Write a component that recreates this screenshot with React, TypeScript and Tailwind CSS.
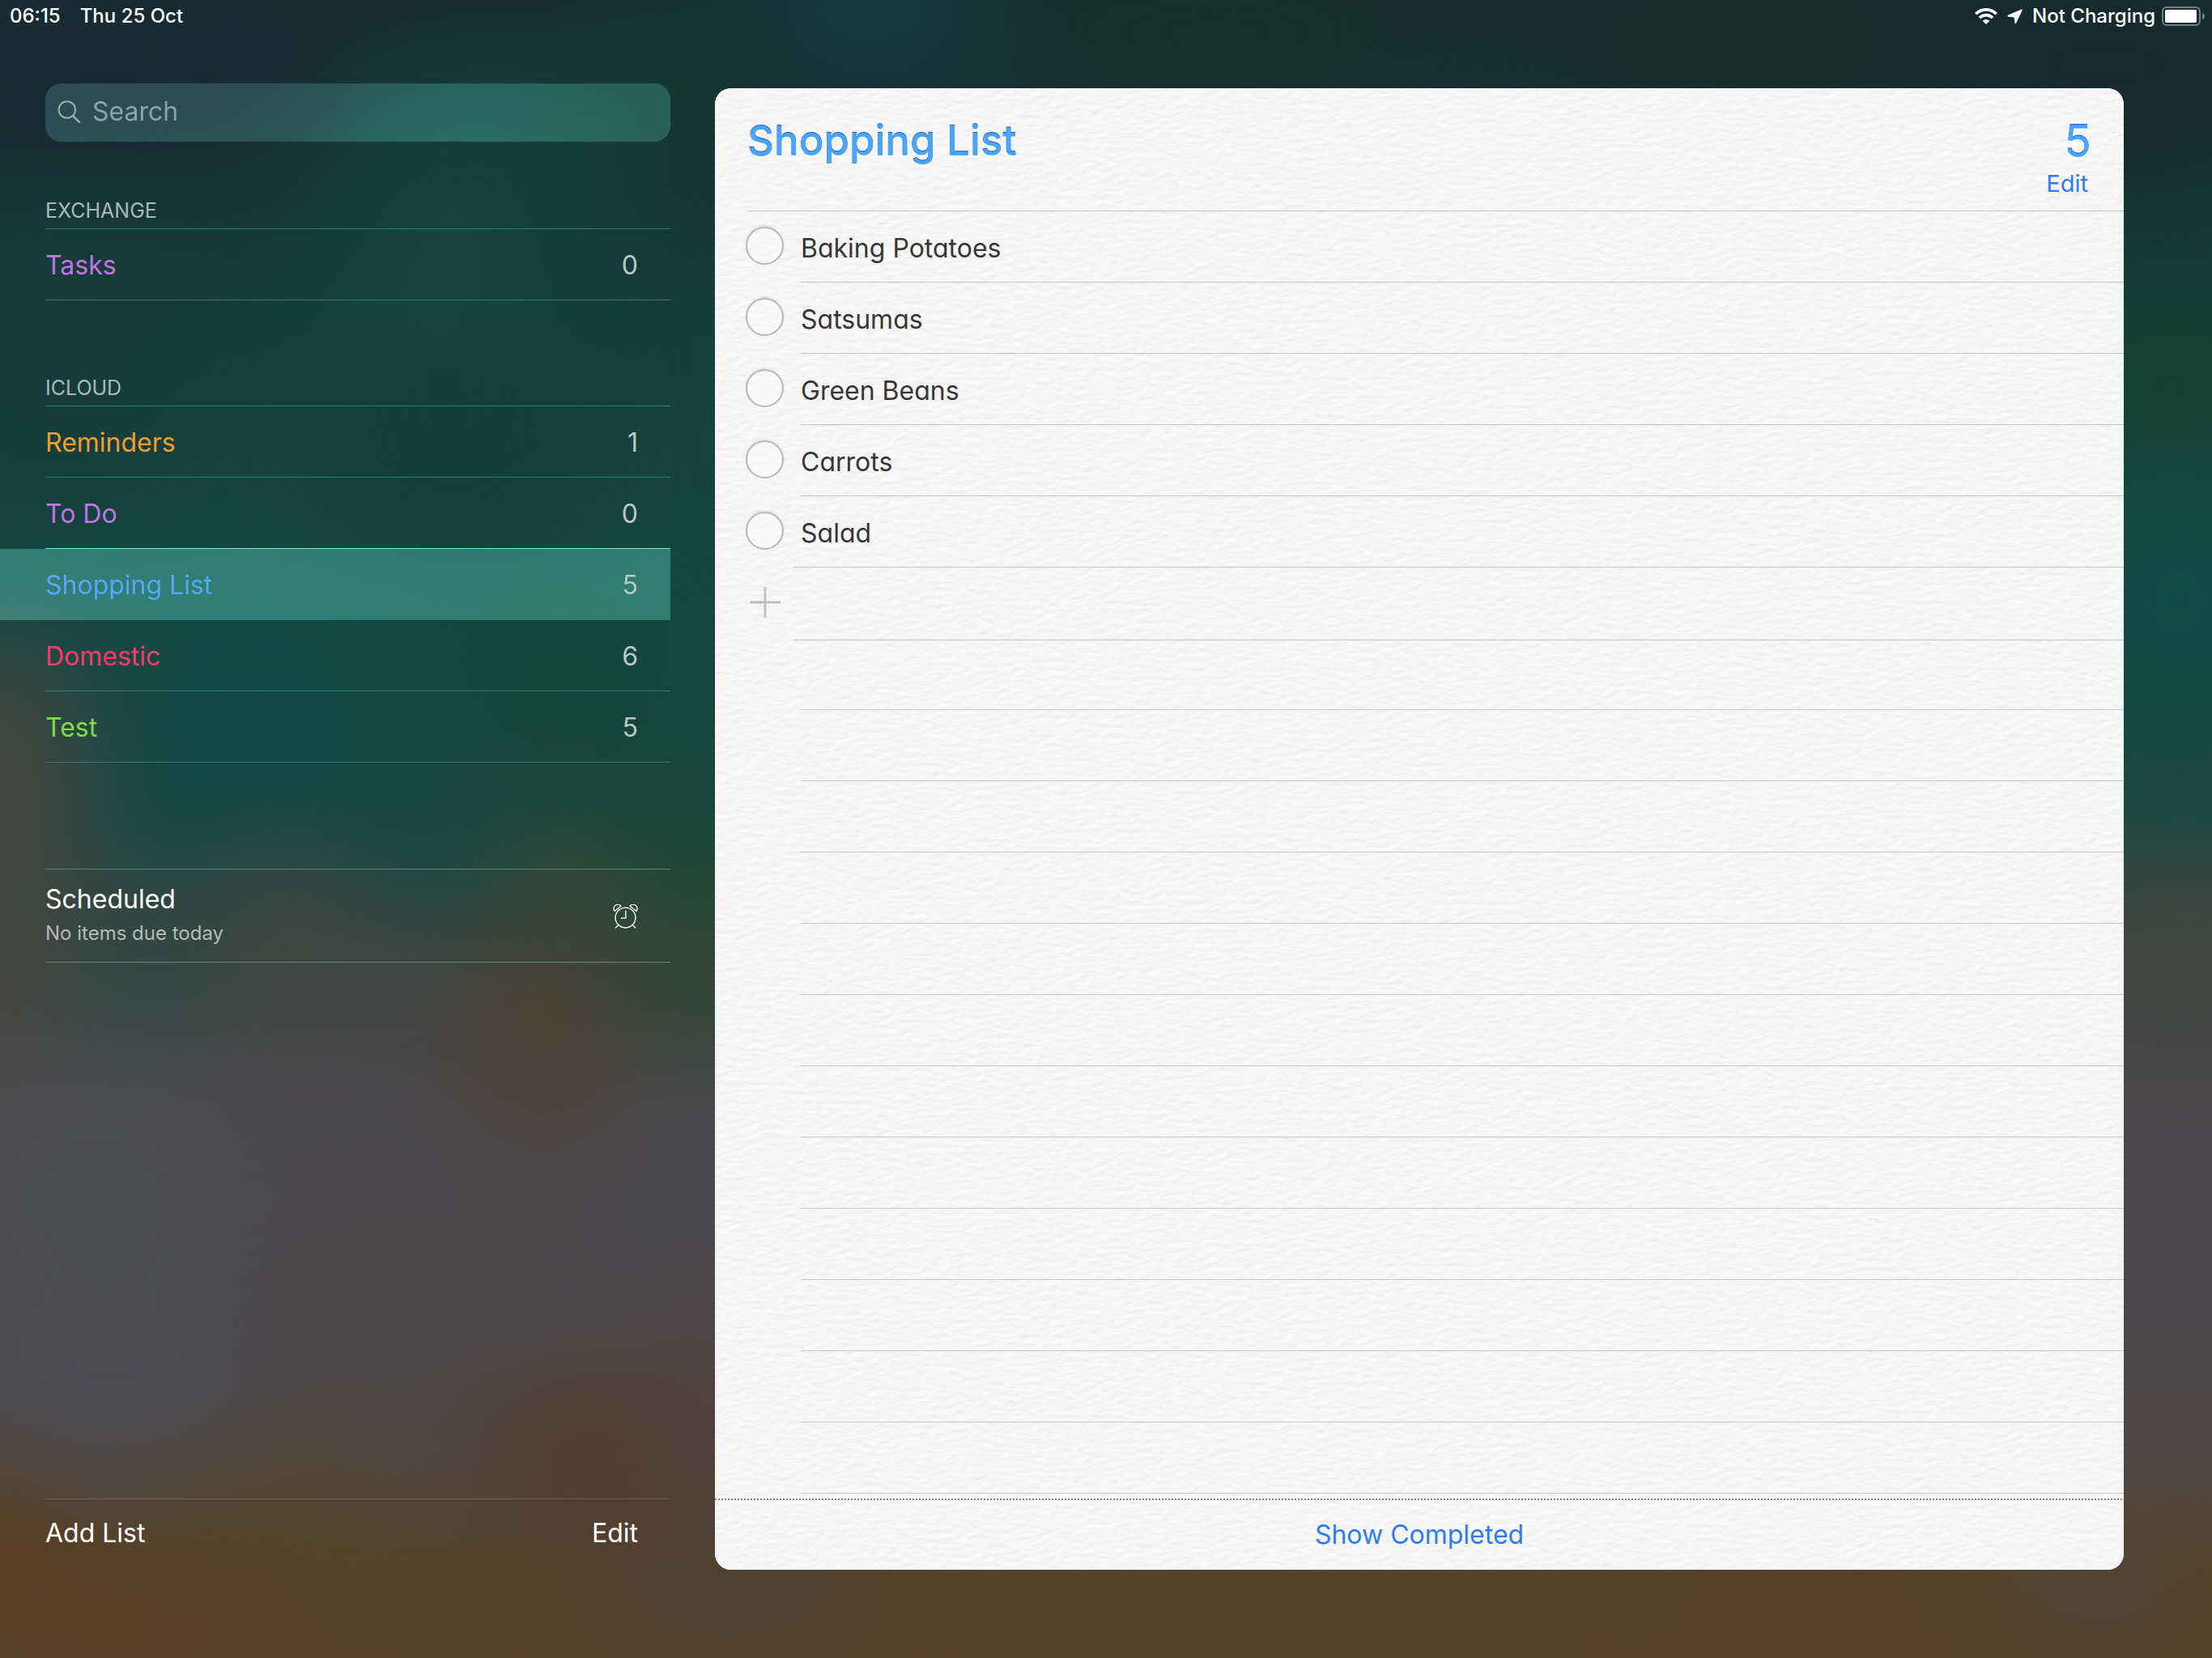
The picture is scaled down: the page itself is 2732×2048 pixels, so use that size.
import React from "react";

type ListEntry = {
  name: string;
  count: number;
  color: string;
  line: string;
  selected?: boolean;
};

const GREEN_LINE = "border-[#2c7f6f]";

const exchange: ListEntry[] = [
  { name: "Tasks", count: 0, color: "text-[#c173e0]", line: GREEN_LINE },
];

const icloud: ListEntry[] = [
  { name: "Reminders", count: 1, color: "text-[#f49b2e]", line: GREEN_LINE },
  { name: "To Do", count: 0, color: "text-[#c173e0]", line: "border-[#6af0d2]" },
  { name: "Shopping List", count: 5, color: "text-[#55a8f5]", line: "border-transparent", selected: true },
  { name: "Domestic", count: 6, color: "text-[#f43a6b]", line: GREEN_LINE },
  { name: "Test", count: 5, color: "text-[#7fdb4e]", line: "border-[#35796b]" },
];

const items = ["Baking Potatoes", "Satsumas", "Green Beans", "Carrots", "Salad"];

type Blob = [cx: number, cy: number, rx: number, ry: number, color: string];

const blobs: Blob[] = [
  [80, 60, 360, 150, "#172b32"],
  [600, 200, 200, 120, "#15403b"],
  [1080, 0, 150, 110, "#153c41"],
  [1500, 40, 260, 80, "#163229"],
  [2200, 60, 300, 90, "#172f29"],
  [2600, 80, 250, 150, "#162b2e"],
  [820, 110, 110, 110, "#153931"],
  [540, 380, 170, 150, "#15433a"],
  [60, 420, 160, 160, "#163c3b"],
  [560, 560, 170, 120, "#153f3b"],
  [700, 850, 160, 130, "#144539"],
  [300, 930, 200, 130, "#134845"],
  [2680, 470, 120, 90, "#15432f"],
  [2690, 740, 120, 150, "#144b46"],
  [870, 1050, 110, 100, "#154737"],
  [0, 980, 110, 190, "#45453f"],
  [360, 1130, 110, 80, "#424540"],
  [530, 1050, 110, 70, "#16483f"],
  [690, 1090, 80, 70, "#35463a"],
  [170, 1190, 110, 80, "#2c4842"],
  [860, 1190, 100, 110, "#2f4637"],
  [500, 1220, 110, 70, "#424545"],
  [670, 1270, 90, 120, "#4b4032"],
  [2700, 1180, 130, 80, "#424540"],
  [0, 1230, 90, 60, "#494541"],
  [120, 1480, 230, 190, "#4c4d50"],
  [430, 1430, 170, 120, "#4b494d"],
  [830, 1440, 90, 130, "#4a494d"],
  [450, 1640, 150, 130, "#4b4647"],
  [130, 1720, 210, 110, "#4c4c52"],
  [740, 1800, 150, 90, "#533a2a"],
  [870, 1720, 90, 90, "#4f4140"],
  [0, 1900, 90, 90, "#593d1f"],
  [330, 1860, 180, 60, "#55442b"],
  [150, 2010, 220, 90, "#573e23"],
  [900, 1960, 180, 60, "#514136"],
  [2220, 1990, 160, 60, "#573f26"],
  [2590, 1960, 110, 60, "#53453a"],
];

function Wallpaper() {
  return (
    <svg
      aria-hidden="true"
      className="absolute inset-0 h-full w-full"
      viewBox="0 0 2732 2048"
      preserveAspectRatio="none"
    >
      <defs>
        <linearGradient id="base" x1="0" y1="0" x2="0" y2="1">
          <stop offset="0" stopColor="#172c2f" />
          <stop offset="0.1" stopColor="#163536" />
          <stop offset="0.22" stopColor="#15413b" />
          <stop offset="0.38" stopColor="#144742" />
          <stop offset="0.49" stopColor="#1c4940" />
          <stop offset="0.57" stopColor="#3c4540" />
          <stop offset="0.66" stopColor="#4b474a" />
          <stop offset="0.8" stopColor="#4c494c" />
          <stop offset="0.88" stopColor="#4f4745" />
          <stop offset="0.94" stopColor="#55432b" />
          <stop offset="1" stopColor="#543f27" />
        </linearGradient>
        <filter id="soft" x="-20%" y="-20%" width="140%" height="140%" colorInterpolationFilters="sRGB">
          <feGaussianBlur stdDeviation="62" />
        </filter>
      </defs>
      <rect width="2732" height="2048" fill="url(#base)" />
      <g filter="url(#soft)">
        {blobs.map(([cx, cy, rx, ry, color]) => (
          <ellipse key={`${cx}-${cy}`} cx={cx} cy={cy} rx={rx} ry={ry} fill={color} />
        ))}
      </g>
    </svg>
  );
}

function PaperTexture() {
  return (
    <svg aria-hidden="true" className="absolute inset-0 h-full w-full">
      <filter id="paper" x="0" y="0" width="100%" height="100%" colorInterpolationFilters="sRGB">
        <feTurbulence type="fractalNoise" baseFrequency="0.08 0.17" numOctaves="3" seed="7" stitchTiles="stitch" />
        <feDiffuseLighting lightingColor="#ffffff" surfaceScale="1" diffuseConstant="1">
          <feDistantLight azimuth="250" elevation="60" />
        </feDiffuseLighting>
        <feComponentTransfer>
          <feFuncR type="linear" slope="0.15" intercept="0.835" />
          <feFuncG type="linear" slope="0.15" intercept="0.835" />
          <feFuncB type="linear" slope="0.15" intercept="0.835" />
        </feComponentTransfer>
      </filter>
      <rect width="100%" height="100%" filter="url(#paper)" />
    </svg>
  );
}

function WifiIcon() {
  return (
    <svg aria-hidden="true" viewBox="124 30 82 60" className="h-5 w-7" fill="none" stroke="#fff" strokeWidth="11">
      <path d="M127 52 A52 52 0 0 1 203 52" />
      <path d="M141 66 A33 33 0 0 1 189 66" />
      <path d="M152 77 A19 19 0 0 1 178 77 L165 90 Z" fill="#fff" stroke="none" />
    </svg>
  );
}

function LocationIcon() {
  return (
    <svg aria-hidden="true" viewBox="239 35 58 57" className="h-[19px] w-[19px]" fill="#fff">
      <path d="M293 36 L242 58 Q238 62 243 64 L262 66 Q265 67 266 70 L268 88 Q270 92 273 88 L296 40 Q297 35 293 36 Z" />
    </svg>
  );
}

function BatteryIcon() {
  return (
    <svg aria-hidden="true" viewBox="0 0 54 24" className="h-6 w-[54px]">
      <rect x="1" y="1" width="46" height="22" rx="5" fill="none" stroke="#fff" strokeOpacity="0.4" strokeWidth="2" />
      <rect x="4" y="4" width="39" height="16" rx="2" fill="#fff" />
      <path d="M50 8 Q53 9 53 12 Q53 15 50 16 Z" fill="#fff" fillOpacity="0.4" />
    </svg>
  );
}

function StatusBar() {
  return (
    <header className="flex h-10 items-center justify-between pl-3 pr-2 text-[24px] leading-8 font-medium text-white">
      <div className="flex gap-6">
        <span>06:15</span>
        <span>Thu 25 Oct</span>
      </div>
      <div className="flex items-center">
        <WifiIcon />
        <span className="mx-3">
          <LocationIcon />
        </span>
        <span className="mr-2">Not Charging</span>
        <BatteryIcon />
      </div>
    </header>
  );
}

function ListRow({ entry }: { entry: ListEntry }) {
  return (
    <li>
      <button
        type="button"
        aria-current={entry.selected ? "true" : undefined}
        className={
          entry.selected
            ? "block w-full bg-white/8 pl-14 text-left backdrop-brightness-[1.65]"
            : "block w-full pl-14 text-left"
        }
      >
        <span className={`flex h-[88px] items-center justify-between border-b pt-0.5 pr-10 ${entry.line}`}>
          <span className={entry.color}>{entry.name}</span>
          <span className="text-[#b9c7c6]">{entry.count}</span>
        </span>
      </button>
    </li>
  );
}

function Group({ title, height, entries }: { title: string; height: string; entries: ListEntry[] }) {
  return (
    <section>
      <h2
        className={`ml-14 flex items-end border-b border-[#2c7f6f] pb-1.5 text-[25px] leading-8 text-[#a9b9b8] ${height}`}
      >
        {title}
      </h2>
      <ul>
        {entries.map((entry) => (
          <ListRow key={entry.name} entry={entry} />
        ))}
      </ul>
    </section>
  );
}

function AlarmIcon() {
  return (
    <svg
      aria-hidden="true"
      viewBox="53 45 92 92"
      className="h-[31px] w-[31px]"
      fill="none"
      stroke="#fff"
      strokeWidth="4"
      strokeLinecap="round"
      strokeLinejoin="round"
    >
      <circle cx="99" cy="97" r="37" />
      <path d="M100 70 V99 H82" strokeLinecap="butt" strokeLinejoin="miter" />
      <path d="M59 73 C51 60 61 48 72 49 C77 49 81 51 83 54 Z" />
      <path d="M139 73 C147 60 137 48 126 49 C121 49 117 51 115 54 Z" />
      <path d="M73 124 L63 134 M125 124 L135 134" />
    </svg>
  );
}

function Sidebar() {
  return (
    <aside className="flex min-w-0 flex-[828] flex-col pt-[63px] pb-[109px] text-[32px] leading-10">
      <label className="ml-14 flex h-[72px] items-center gap-[14px] rounded-[20px] bg-white/4 pb-0.5 pl-[15px] backdrop-brightness-[1.6]">
        <svg aria-hidden="true" viewBox="34 40 88 88" className="h-[29px] w-[29px] shrink-0" fill="none" stroke="#8fb0b1" strokeWidth="6">
          <circle cx="70" cy="75" r="31" />
          <path d="M92 98 L118 124" strokeWidth="8" />
        </svg>
        <input
          type="text"
          aria-label="Search"
          placeholder="Search"
          className="min-w-0 flex-1 bg-transparent text-white outline-none placeholder:text-[#86a6a6]"
        />
      </label>
      <Group title="EXCHANGE" height="h-[108px]" entries={exchange} />
      <Group title="ICLOUD" height="h-[131px]" entries={icloud} />
      <button
        type="button"
        className="mt-[131px] ml-14 flex h-[116px] items-center justify-between border-y border-t-[#5a8676] border-b-[#6d857b] pr-10 text-left"
      >
        <span className="flex flex-col gap-0.5 pt-0.5">
          <span className="text-white">Scheduled</span>
          <span className="text-[24px] text-[#b4bbb8]">No items due today</span>
        </span>
        <AlarmIcon />
      </button>
      <div className="grow" />
      <footer className="ml-14 flex h-[88px] items-center justify-between border-t border-white/15 pr-10 pb-1 text-white">
        <button type="button">Add List</button>
        <button type="button">Edit</button>
      </footer>
    </aside>
  );
}

function ItemRow({ name, last }: { name: string; last: boolean }) {
  const id = name.toLowerCase().replace(" ", "-");
  return (
    <li className="flex h-[88px]">
      <span className={last ? "flex w-[97px] items-center pb-1 pl-[38px]" : "flex w-[106px] items-center pb-1 pl-[38px]"}>
        <input
          id={id}
          type="checkbox"
          className="h-[47px] w-[47px] shrink-0 appearance-none rounded-full border-2 border-[#b8b8b8] bg-white/30 shadow-[0_-2px_3px_rgba(0,0,0,0.07)] checked:bg-[#4ba5f6]"
        />
      </span>
      <label
        htmlFor={id}
        className={
          last
            ? "flex flex-1 items-center border-b border-[#c4c4c4] pt-1 pl-[9px]"
            : "flex flex-1 items-center border-b border-[#c4c4c4] pt-1"
        }
      >
        {name}
      </label>
    </li>
  );
}

function ListPanel() {
  return (
    <main className="relative mt-[69px] mr-[109px] mb-[109px] ml-[55px] flex min-w-0 flex-[1740] flex-col overflow-hidden rounded-[20px] bg-[#f6f6f6]">
      <PaperTexture />
      <div className="relative flex flex-1 flex-col">
        <header className="ml-10 flex h-[152px] justify-between border-b border-[#c4c4c4] pt-8 pr-10">
          <h1 className="text-[51px] leading-[66px] font-medium text-[#4ba5f6] [text-shadow:0_-1px_0_#2a50e0,0_2px_0_#ffffff]">
            Shopping List
          </h1>
          <div className="flex flex-col items-end">
            <span className="text-[55px] leading-[66px] text-[#4ba5f6] [text-shadow:0_-1px_0_#2a50e0,0_2px_0_#ffffff]">
              5
            </span>
            <button type="button" className="mr-1 text-[29px] leading-10 text-[#2f7bf6]">
              Edit
            </button>
          </div>
        </header>
        <ul className="text-[32px] leading-10 text-[#363636] [font-feature-settings:'cv11']">
          {items.map((name, i) => (
            <ItemRow key={name} name={name} last={i === items.length - 1} />
          ))}
        </ul>
        <div className="flex h-[90px]">
          <div className="flex w-[97px] items-center pb-1 pl-[43px]">
            <button type="button" aria-label="Add item">
              <svg aria-hidden="true" viewBox="0 0 38 38" className="h-[38px] w-[38px]" stroke="#c4c4c4" strokeWidth="3">
                <path d="M19 0 V38" />
                <path d="M0 19 H38" stroke="#bdbdbd" />
              </svg>
            </button>
          </div>
          <div className="flex-1 border-b border-[#c4c4c4]" />
        </div>
        <div className="ml-[106px] h-[86px] border-b border-[#c8c8c8]" />
        {Array.from({ length: 11 }, (_, i) => (
          <div key={i} className="ml-[106px] h-[88px] border-b border-[#c8c8c8]" />
        ))}
        <div className="min-h-1.5 grow" />
        <footer className="h-[88px] bg-[repeating-linear-gradient(90deg,#8a8a8a_0_2px,transparent_2px_4px)] bg-[length:100%_2px] bg-no-repeat">
          <button type="button" className="h-full w-full pt-0.5 text-[32px] leading-10 text-[#2f7bf6]">
            Show Completed
          </button>
        </footer>
      </div>
    </main>
  );
}

export default function App() {
  return (
    <div className="relative min-h-screen bg-[#15413b] font-['Inter','Liberation_Sans',sans-serif]">
      <Wallpaper />
      <div className="relative flex min-h-screen flex-col">
        <StatusBar />
        <div className="flex grow">
          <Sidebar />
          <ListPanel />
        </div>
      </div>
    </div>
  );
}
